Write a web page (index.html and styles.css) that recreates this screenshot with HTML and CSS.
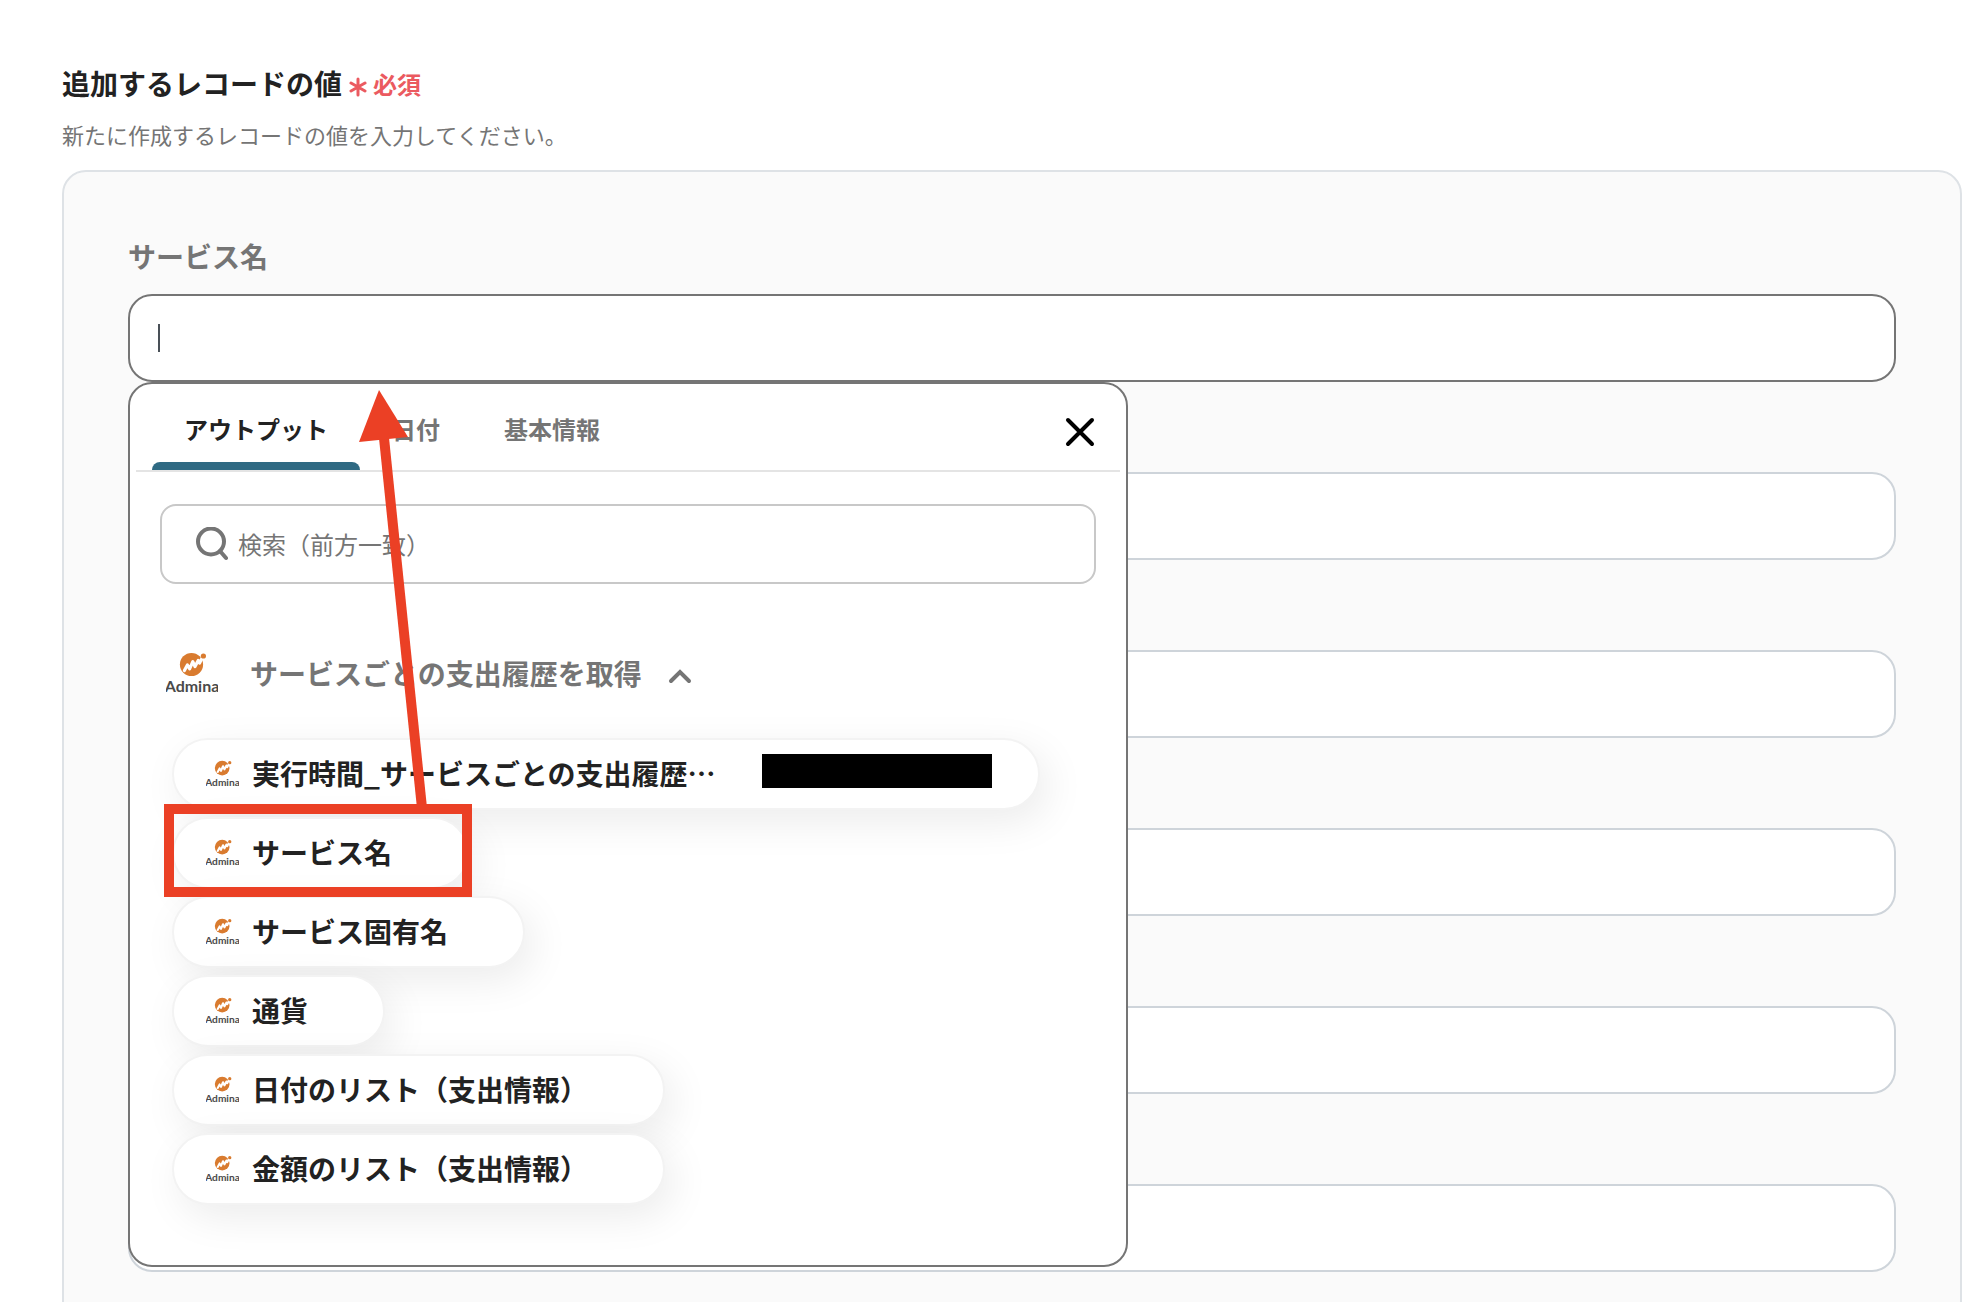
FILE: index.html
```
<!DOCTYPE html>
<html lang="ja">
<head>
    <meta charset="UTF-8" />
    <meta name="viewport" content="width=device-width, initial-scale=1" />
    <title>追加するレコードの値</title>
    <link rel="stylesheet" href="styles.css">
</head>
<body>
    <!-- Logo reutilizado en el grupo y en cada opción -->
    <svg class="sprite" aria-hidden="true">
        <symbol id="logo" viewBox="0 0 52 42">
            <circle cx="25.5" cy="12.5" r="11.6" fill="#d97b2f" />
            <path d="M18.4 18.6L21.4 13L23.6 16.8L26.8 9.6L29 14.6L32.2 8.4L33.6 11L37 4.5" fill="none" stroke="#fff" stroke-width="3.2" stroke-linejoin="round" stroke-linecap="round" />
            <circle cx="37.4" cy="4" r="2.6" fill="#d97b2f" />
            <text class="logo-texto" x="26" y="40" text-anchor="middle">Admina</text>
        </symbol>
    </svg>

    <main class="pagina">
        <header class="cabecera">
            <h1 class="titulo">追加するレコードの値
                <span class="requerido">
                    <svg class="asterisco" width="18" height="20" viewBox="0 0 18 20" aria-hidden="true">
                        <path d="M9 2V18M2 6L16 14M16 6L2 14" stroke="currentColor" stroke-width="3" stroke-linecap="round" />
                    </svg>必須</span>
            </h1>
            <p class="descripcion">新たに作成するレコードの値を入力してください。</p>
        </header>

        <section class="panel">
            <div class="campo">
                <label class="etiqueta" for="campo1">サービス名</label>
                <div class="caja">
                    <input id="campo1" class="entrada activa" type="text" />
                    <span class="cursor"></span>

                    <!-- Selector de valores -->
                    <div class="selector">
                        <div class="barra">
                            <div class="pestanas" role="tablist">
                                <button class="pestana elegida" role="tab" aria-selected="true">アウトプット</button>
                                <button class="pestana" role="tab" aria-selected="false">日付</button>
                                <button class="pestana" role="tab" aria-selected="false">基本情報</button>
                            </div>
                            <button class="cerrar" aria-label="閉じる">
                                <svg width="32" height="32" viewBox="0 0 32 32">
                                    <path d="M4 4L28 28M28 4L4 28" stroke="#000" stroke-width="4" stroke-linecap="round" />
                                </svg>
                            </button>
                        </div>

                        <div class="contenido">
                            <label class="busqueda">
                                <svg width="32" height="34" viewBox="0 0 32 34" fill="none" stroke="#757575" stroke-width="4" stroke-linecap="round" aria-hidden="true">
                                    <circle cx="15" cy="14.5" r="13" />
                                    <path d="M24 24L30 31" />
                                </svg>
                                <input class="buscar" type="text" placeholder="検索（前方一致）" aria-label="検索" />
                            </label>

                            <button class="grupo" aria-expanded="true">
                                <svg class="logo"><use href="#logo" /></svg>
                                <span>サービスごとの支出履歴を取得</span>
                                <svg class="flecha-arriba" width="24" height="16" viewBox="0 0 24 16" fill="none" aria-hidden="true">
                                    <path d="M3 13L12 4L21 13" stroke="#757575" stroke-width="4" stroke-linecap="round" />
                                </svg>
                            </button>

                            <div class="opciones">
                                <button class="opcion">
                                    <svg class="logo-mini"><use href="#logo" /></svg>
                                    <span>実行時間_サービスごとの支出履歴…</span>
                                    <span class="oculto"></span>
                                </button>
                                <button class="opcion">
                                    <svg class="logo-mini"><use href="#logo" /></svg>
                                    <span class="nombre">サービス名</span>
                                </button>
                                <button class="opcion">
                                    <svg class="logo-mini"><use href="#logo" /></svg>
                                    <span class="nombre">サービス固有名</span>
                                </button>
                                <button class="opcion">
                                    <svg class="logo-mini"><use href="#logo" /></svg>
                                    <span class="nombre">通貨</span>
                                </button>
                                <button class="opcion">
                                    <svg class="logo-mini"><use href="#logo" /></svg>
                                    <span class="nombre">日付のリスト（支出情報）</span>
                                </button>
                                <button class="opcion">
                                    <svg class="logo-mini"><use href="#logo" /></svg>
                                    <span class="nombre">金額のリスト（支出情報）</span>
                                </button>
                            </div>
                        </div>

                        <!-- Marca roja y flecha hacia el campo -->
                        <svg class="anotacion" width="344" height="514" viewBox="0 0 344 514" fill="none" aria-hidden="true">
                            <path d="M254 54L292 424" stroke="#eb4025" stroke-width="10" />
                            <path d="M249 6L278 53L229 58Z" fill="#eb4025" />
                            <rect x="39" y="425" width="298" height="83" stroke="#eb4025" stroke-width="10" />
                        </svg>
                    </div>
                </div>
            </div>

            <div class="campo sin-etiqueta">
                <input class="entrada" type="text" aria-label="サービス固有名" />
            </div>
            <div class="campo sin-etiqueta">
                <input class="entrada" type="text" aria-label="通貨" />
            </div>
            <div class="campo sin-etiqueta">
                <input class="entrada" type="text" aria-label="日付" />
            </div>
            <div class="campo sin-etiqueta">
                <input class="entrada" type="text" aria-label="金額" />
            </div>
            <div class="campo sin-etiqueta">
                <input class="entrada" type="text" aria-label="備考" />
            </div>
        </section>
    </main>
</body>
</html>
```
FILE: styles.css
```
* {
    box-sizing: border-box;
}
body {
    margin: 0;
    background-color: #fff;
    color: #222;
    font-family: "Noto Sans CJK JP", sans-serif;
}
button,
input {
    font-family: inherit;
    color: inherit;
}
button {
    padding: 0;
    border: none;
    background: none;
    cursor: pointer;
}
svg {
    display: block;
    flex-shrink: 0;
}
.sprite {
    display: none;
}
.logo-texto {
    font-family: Lato, sans-serif;
    font-size: 16px;
    font-weight: bold;
    fill: #4a4a4a;
}
.pagina {
    height: 100vh;
    overflow-y: auto;
    scrollbar-width: none;
    padding: 63px 26px 64px 62px;
}
.cabecera {
    display: flex;
    flex-direction: column;
    gap: 14px;
    margin-bottom: 19px;
}
.titulo {
    display: flex;
    align-items: center;
    gap: 7px;
    margin: 0;
    font-size: 28px;
    line-height: 40px;
}
.requerido {
    display: flex;
    align-items: center;
    gap: 6px;
    padding-top: 2px;
    font-size: 24px;
    line-height: 36px;
    color: #eb5a60;
}
.asterisco {
    margin-top: 6px;
}
.descripcion {
    margin: 0;
    font-size: 22px;
    line-height: 34px;
    color: #757575;
}
.panel {
    display: flex;
    flex-direction: column;
    gap: 32px;
    padding: 64px;
    border: 2px solid #dee2e6;
    border-radius: 24px;
    background-color: #fafafa;
}
.campo {
    display: flex;
    flex-direction: column;
    gap: 18px;
}
.campo.sin-etiqueta {
    padding-top: 58px;
}
.etiqueta {
    font-size: 28px;
    font-weight: bold;
    line-height: 40px;
    color: #757575;
}
.caja {
    position: relative;
}
.entrada {
    display: block;
    width: 100%;
    height: 88px;
    padding: 0 28px;
    border: 2px solid #ced4da;
    border-radius: 24px;
    background-color: #fff;
    font-size: 28px;
    outline: none;
}
.entrada.activa {
    border-color: #757575;
}
.cursor {
    position: absolute;
    top: 30px;
    left: 30px;
    width: 2px;
    height: 28px;
    background-color: #495057;
}

/* Selector desplegable */
.selector {
    position: absolute;
    top: 100%;
    left: 0;
    z-index: 10;
    width: 1000px;
    max-width: 100%;
    padding: 0 6px;
    border: 2px solid #757575;
    border-radius: 24px;
    background-color: #fff;
}
.barra {
    display: flex;
    justify-content: space-between;
    align-items: center;
    padding: 0 18px 0 16px;
    border-bottom: 2px solid #e4e4e4;
}
.pestanas {
    display: flex;
}
.pestana {
    position: relative;
    padding: 27px 32px 23px;
    font-size: 24px;
    font-weight: bold;
    line-height: 36px;
    color: #757575;
}
.pestana.elegida {
    color: #222;
}
.pestana.elegida::after {
    content: "";
    position: absolute;
    left: 0;
    right: 0;
    bottom: 0;
    height: 8px;
    border-radius: 8px 8px 0 0;
    background-color: #2f6a83;
}
.cerrar {
    margin-top: 10px;
    padding: 6px;
}
.contenido {
    padding: 32px 24px 60px;
}
.busqueda {
    display: flex;
    align-items: center;
    gap: 10px;
    height: 80px;
    padding: 0 34px;
    border: 2px solid #c8c8c8;
    border-radius: 16px;
}
.buscar {
    flex: 1;
    padding: 0;
    border: none;
    background: none;
    font-size: 24px;
    line-height: 36px;
    outline: none;
}
.buscar::placeholder {
    color: #757575;
    opacity: 1;
}
.grupo {
    display: flex;
    align-items: center;
    height: 48px;
    margin: 65px 0 41px 6px;
    font-size: 28px;
    font-weight: bold;
    line-height: 42px;
    color: #757575;
}
.logo {
    width: 52px;
    height: 42px;
    margin-right: 32px;
}
.flecha-arriba {
    margin: 6px 0 0 26px;
}
.opciones {
    display: flex;
    flex-direction: column;
    align-items: flex-start;
    gap: 7px;
    padding-left: 12px;
}
.opcion {
    display: flex;
    align-items: center;
    height: 72px;
    padding: 0 46px 2px 32px;
    border: 2px solid #f3f3f3;
    border-radius: 36px;
    background-color: #fff;
    box-shadow: 8px 12px 40px rgba(0, 0, 0, 0.08);
    font-size: 28px;
    font-weight: bold;
    line-height: 42px;
    color: #222;
    white-space: nowrap;
}
.logo-mini {
    width: 33px;
    height: 27px;
    margin-right: 13px;
}
.nombre {
    margin-right: 29px;
}
.oculto {
    width: 230px;
    height: 34px;
    margin: 0 0 4px 46px;
    background-color: #000;
}
.anotacion {
    position: absolute;
    top: 0;
    left: 0;
    pointer-events: none;
}
```
